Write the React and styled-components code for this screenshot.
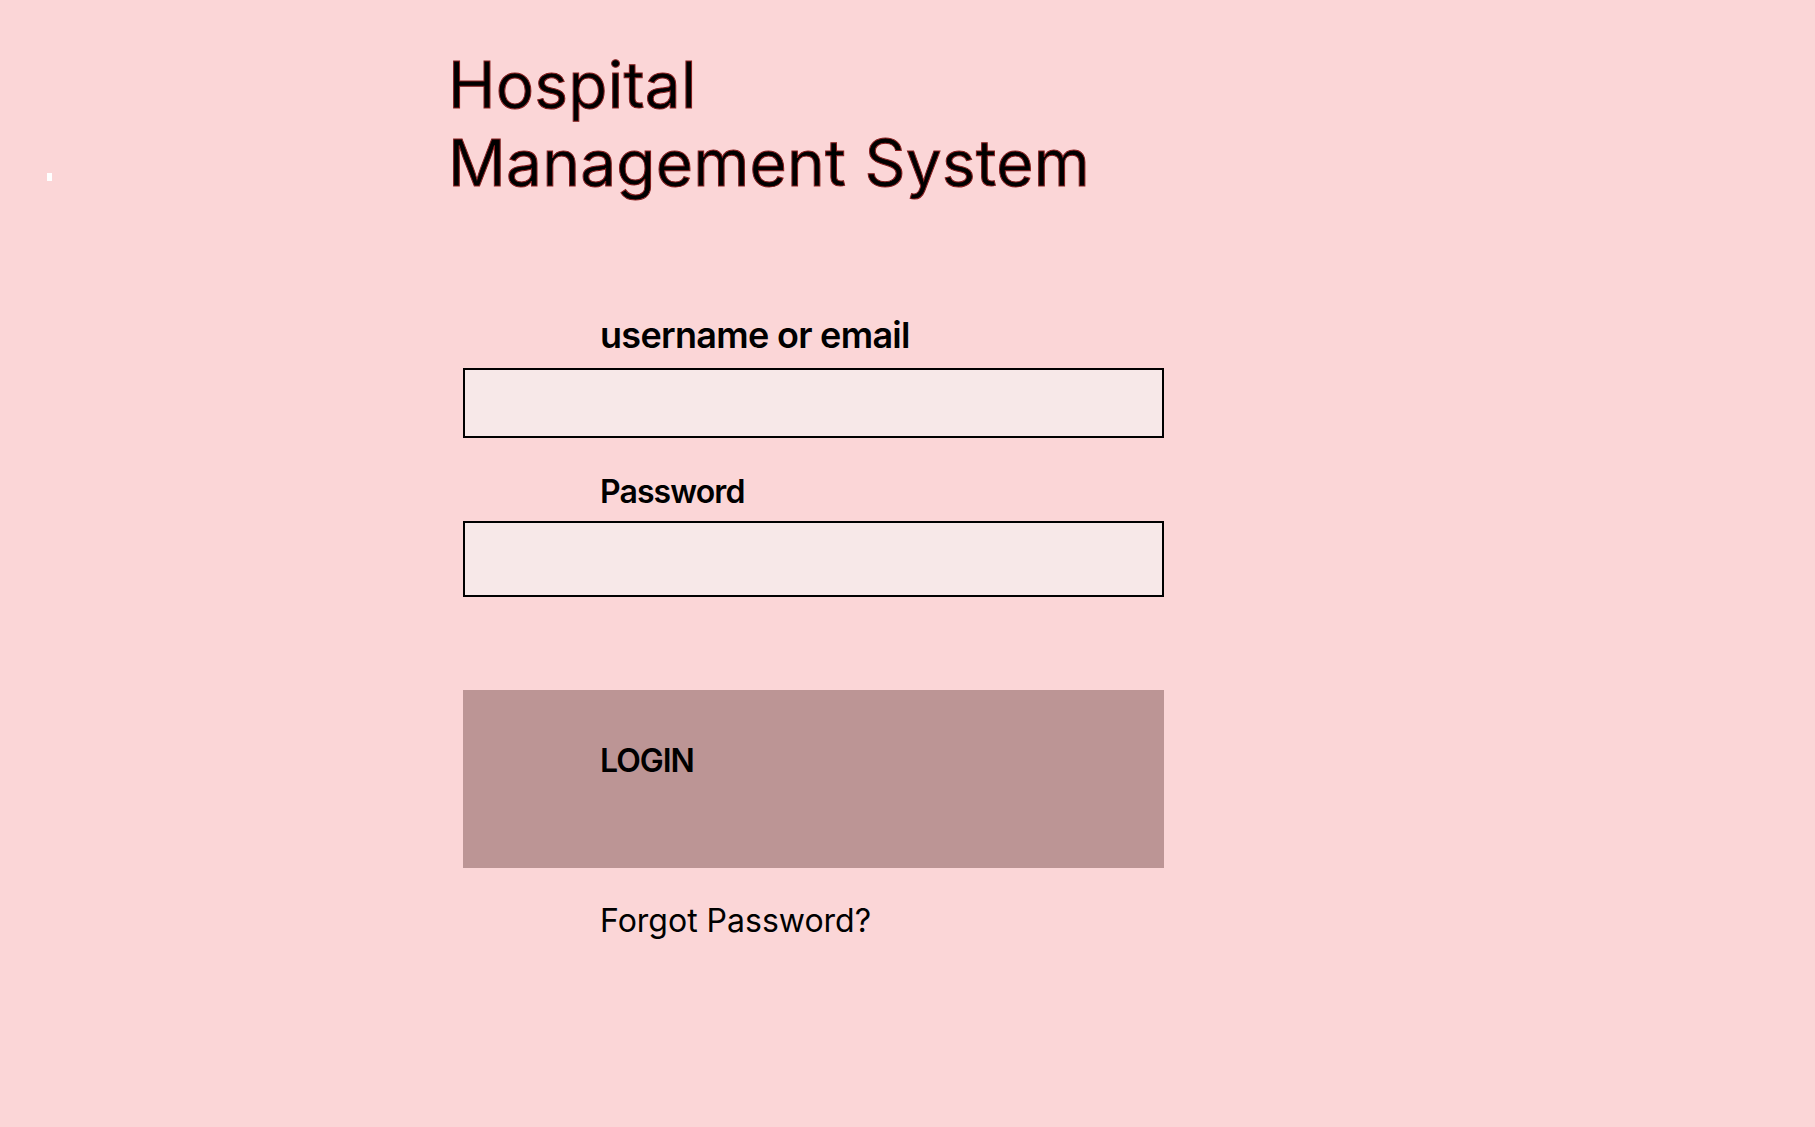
import React from "react";
import styled, { createGlobalStyle } from "styled-components";

const Global = createGlobalStyle`
  html, body { margin: 0; padding: 0; background: #fbd6d7; }
  body { font-family: Inter, "Noto Sans", sans-serif; color: #000; }
  * { box-sizing: border-box; }
`;

const Page = styled.div`
  display: flex;
  min-height: 1127px;
  background: #fbd6d7;
`;

const Aside = styled.aside`
  width: 448px;
  flex: none;
  padding: 173px 0 0 47px;
`;

const Marker = styled.span`
  display: block;
  width: 5px;
  height: 8px;
  background: #ffffff;
`;

const Main = styled.main`
  display: flex;
  flex-direction: column;
  padding-top: 46px;
`;

const Title = styled.h1`
  margin: 0;
  font-size: 64px;
  font-weight: 400;
  line-height: 78px;
  letter-spacing: 0.2px;
  color: #000;
  -webkit-text-stroke: 1px #8a2020;
`;

const Form = styled.form`
  display: flex;
  flex-direction: column;
  width: 701px;
  margin: 111px 0 0 15px;
`;

const Label = styled.label`
  display: block;
  padding-left: 137px;
  font-size: ${(p) => p.$size || 32}px;
  font-weight: 600;
  letter-spacing: ${(p) => p.$ls || 0}px;
  line-height: normal;
  margin-top: ${(p) => p.$top || 0}px;
  margin-bottom: ${(p) => p.$bottom || 0}px;
`;

const Input = styled.input`
  display: block;
  width: 100%;
  height: ${(p) => p.$h}px;
  margin: 0;
  border: 2px solid #000;
  background: #f7e8e8;
  font: inherit;
  outline: none;
`;

const Button = styled.button`
  display: flex;
  align-items: flex-start;
  width: 100%;
  height: 178px;
  margin-top: 93px;
  border: none;
  background: #bc9595;
  text-align: left;
  padding: 51px 0 0 137px;
  font-family: Inter, "Noto Sans", sans-serif;
  font-size: 32px;
  font-weight: 600;
  letter-spacing: -1px;
  color: #000;
  cursor: pointer;
`;

const Forgot = styled.a`
  display: block;
  margin-top: 33px;
  padding-left: 137px;
  font-size: 32px;
  font-weight: 400;
  color: #000;
  text-decoration: none;
`;

export default function App() {
  return (
    <>
      <Global />
      <Page>
        <Aside>
          <Marker />
        </Aside>
        <Main>
          <Title>
            Hospital
            <br />
            Management System
          </Title>
          <Form onSubmit={(e) => e.preventDefault()}>
            <Label $size={36} $ls={-0.7} $bottom={11}>
              username or email
            </Label>
            <Input type="text" $h={70} />
            <Label $size={32} $ls={-0.9} $top={34} $bottom={10}>
              Password
            </Label>
            <Input type="password" $h={76} />
            <Button type="submit">LOGIN</Button>
            <Forgot href="#">Forgot Password?</Forgot>
          </Form>
        </Main>
      </Page>
    </>
  );
}
